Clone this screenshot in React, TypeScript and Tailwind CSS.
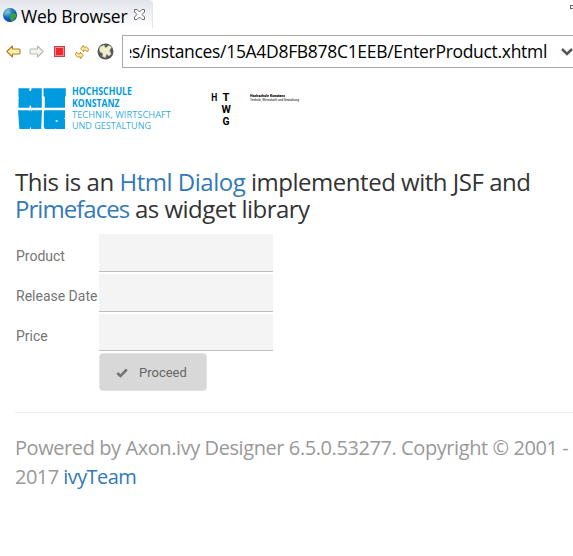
import React from "react";

const Globe = () => (
  <svg width="16" height="16" viewBox="0 0 16 16">
    <defs>
      <radialGradient id="sea" cx="35%" cy="30%" r="75%">
        <stop offset="0" stopColor="#7fc4f5" />
        <stop offset="0.45" stopColor="#1f6fd0" />
        <stop offset="1" stopColor="#0d2f92" />
      </radialGradient>
    </defs>
    <circle cx="8" cy="8" r="7" fill="url(#sea)" />
    <path d="M2 5Q4 1 8 1.2L9 3L7 5L5 6L4 8L2 9Z" fill="#7dc8a0" fillOpacity=".5" />
    <path d="M8 7L11 6L14 7L14 10L11 14L9 14L8 11Z" fill="#35a43a" />
    <path d="M10 2L13 4L12 5Z" fill="#49ad4b" />
  </svg>
);

const CloseIcon = () => (
  <svg width="11" height="11" viewBox="0 0 11 11" fill="#fff" stroke="#6b6b6b" strokeWidth="1">
    <path d="M.5.5H3L5.5 3L8 .5H10.5V3L8 5.5L10.5 8V10.5H8L5.5 8L3 10.5H.5V8L3 5.5L.5 3Z" />
  </svg>
);

const Arrow = ({ flip = false }: { flip?: boolean }) => (
  <svg width="15" height="13" viewBox="0 0 15 13" className={flip ? "-scale-x-100" : ""}>
    <path
      d="M.8 6.5L6.5 1V4H13Q14 4 14 5V8Q14 9 13 9H6.5V12Z"
      fill={flip ? "#f3f3ef" : "#fff2b8"}
      stroke={flip ? "#b9b9b5" : "#b87a14"}
      strokeWidth="1.1"
      strokeLinejoin="round"
    />
  </svg>
);

const Refresh = () => (
  <svg width="16" height="16" viewBox="0 0 16 16" fill="#ffe9a0" stroke="#c48a22" strokeWidth=".9" strokeLinejoin="round">
    <path d="M6.6 4.8L9.4 1.4V3Q13.2 2.2 14.6 5L13.6 8Q12.6 5.6 9.6 6.2V7.8Z" />
    <path d="M9.4 11.2L6.6 14.6V13Q2.8 13.8 1.4 11L2.4 8Q3.4 10.4 6.4 9.8V8.2Z" />
  </svg>
);

const Earth = () => (
  <svg width="17" height="17" viewBox="0 0 17 17">
    <circle cx="8.5" cy="8.5" r="8" fill="#555957" />
    <path
      d="M3 4L7 2L8.5 5L12 2.5L14.5 4L12.5 7.5L14 11L12 13L9.5 11L8.5 14.5L5.5 13.5L6 10.5L3 9L2.5 6.5Z"
      fill="#eeefc9"
      stroke="#c6cbb0"
      strokeWidth=".5"
    />
  </svg>
);

const KonstanzLogo = () => (
  <svg width="160" height="48" viewBox="15 84 160 48" fill="#009ade">
    <path d="M18.5 88.3H29.2L29.6 91H31L31.5 88.3H41.8V107.8H31.3L30.9 105.5H29.8L29.2 107.8H18.5V99L19.1 98L18.5 97Z" />
    <path d="M43.5 88.3H65.8V96L65 97V107.8H44.8V97L43.5 96Z" />
    <path d="M18 110.2H28.8L29.2 111.5L29.8 110.2H31.2L31.7 111.5L32.2 110.2H42L41.2 129H31.2L30.5 126.5L29.7 129H19.4Z" />
    <path d="M44.6 110.2H65V117.8L63.5 118.3L65 119V129H56.2L55.7 128.3L55.2 129H45L43.8 127V112Z" />
    <path d="M55.6 120.2H57.2L58.4 121L57 121.8H55.6Z" fill="#fff" />
    <g fontFamily="'Open Sans', 'Noto Sans', sans-serif">
      <g fontWeight="700" fontSize="9.8">
        <text x="72" y="95.4" textLength="60" lengthAdjust="spacingAndGlyphs">HOCHSCHULE</text>
        <text x="72" y="106.9" textLength="47.5" lengthAdjust="spacingAndGlyphs">KONSTANZ</text>
      </g>
      <text x="72" y="118" fontSize="9.8" fillOpacity=".85" textLength="99" lengthAdjust="spacingAndGlyphs">TECHNIK, WIRTSCHAFT</text>
      <text x="72" y="129" fontSize="9.8" fillOpacity=".85" textLength="79" lengthAdjust="spacingAndGlyphs">UND GESTALTUNG</text>
    </g>
  </svg>
);

const HtwgLogo = () => (
  <svg width="92" height="40" viewBox="209 88 92 40" fill="#000" fontFamily="Roboto, sans-serif">
    <g fontWeight="700" fontSize="11.6">
      <text x="211.3" y="101" textLength="6" lengthAdjust="spacingAndGlyphs">H</text>
      <text x="222.5" y="101" textLength="7" lengthAdjust="spacingAndGlyphs">T</text>
      <text x="221.6" y="113" textLength="9.4" lengthAdjust="spacingAndGlyphs">W</text>
      <text x="222.5" y="125" textLength="7" lengthAdjust="spacingAndGlyphs">G</text>
    </g>
    <text x="250" y="97.2" fontSize="2.8" fontWeight="900" textLength="35" lengthAdjust="spacingAndGlyphs">Hochschule Konstanz</text>
    <text x="250" y="101.4" fontSize="3.4" textLength="49" lengthAdjust="spacingAndGlyphs">Technik, Wirtschaft und Gestaltung</text>
  </svg>
);

const Field = ({ label, last = false }: { label: string; last?: boolean }) => (
  <label className={last ? "flex h-[37px] items-center" : "flex h-[38px] items-center"}>
    <span className={last ? "w-[84px] shrink-0 whitespace-nowrap pl-px pt-2 text-[14px] text-[#757575]" : "w-[84px] shrink-0 whitespace-nowrap pl-px pt-1.5 text-[14px] text-[#757575]"}>{label}</span>
    <input className="h-full w-[174px] border-b border-[#bdbdbd] bg-[#f4f4f4] outline-none" />
  </label>
);

export default function App() {
  return (
    <div className="h-[556px] w-[573px] overflow-hidden bg-white font-['Open_Sans','Noto_Sans',sans-serif]">
      <header className="flex h-7 items-start justify-between">
        <div className="flex h-7 w-[153px] items-center rounded-tr-sm border-r border-[#e3e4ec] bg-linear-to-b from-[#e2e4ec] to-white pl-0.5 pt-0.5">
          <Globe />
          <span className="ml-[3px] w-[113px] whitespace-nowrap pt-0.5 text-[17.5px] leading-7 tracking-[-0.25px] text-black">Web Browser</span>
          <span className="-mt-0.5"><CloseIcon /></span>
        </div>
        <span className="mt-[5px] h-1 w-[3px] border border-r-0 border-[#666]" />
      </header>

      <nav className="flex h-[47px] items-center pl-1.5">
        <div className="flex w-[116px] items-center">
          <Arrow />
          <span className="ml-2 flex"><Arrow flip /></span>
          <span className="ml-2.5 size-[11px] border border-[#c8404c] bg-[#ee2730] shadow-[inset_0_0_0_1px_#f58a8d]" />
          <span className="ml-[9px]"><Refresh /></span>
          <span className="ml-[7px]"><Earth /></span>
        </div>
        <div className="flex h-[33px] flex-1 items-center overflow-hidden border border-r-0 border-[#a8a8a8]">
          <div className="ml-[7px] flex w-[420px] justify-end overflow-hidden">
            <span className="whitespace-nowrap text-[17.5px] tracking-[-0.31px] text-black">es/instances/15A4D8FB878C1EEB/EnterProduct.xhtml</span>
          </div>
          <svg className="ml-[14px] shrink-0" width="12" height="10" viewBox="0 0 12 10" fill="none" stroke="#555" strokeWidth="2.5">
            <path d="M1 2L6 7L11 2" />
          </svg>
        </div>
      </nav>

      <main className="pl-[15px]">
        <div className="flex h-[93px] pt-[9px]">
          <KonstanzLogo />
          <span className="ml-[34px] mt-1"><HtwgLogo /></span>
        </div>
        <h1 className="whitespace-nowrap text-[24px] leading-[27px] text-[#333]">
          <span className="block tracking-[-0.48px]">
            This is an <a className="text-[#337ab7]">Html Dialog</a> implemented with JSF and
          </span>
          <span className="block tracking-[-0.52px]">
            <a className="tracking-[-0.95px] text-[#337ab7]">Primefaces</a> as widget library
          </span>
        </h1>
        <form className="mt-3 flex flex-col gap-0.5 font-['Roboto',sans-serif]">
          <Field label="Product" />
          <Field label="Release Date" />
          <Field label="Price" last />
          <button type="button" className="ml-[84px] flex h-[38px] w-[108px] items-center rounded-sm border border-[#e2e2e2] bg-[#d8d8d8] text-[13px] text-[#666]">
            <svg className="ml-4 mt-0.5" width="12" height="10" viewBox="0 0 12 10" fill="none" stroke="#757575" strokeWidth="2.6">
              <path d="M1.3 5L4.5 8L10.8 1.5" />
            </svg>
            <span className="ml-[11px] pt-0.5">Proceed</span>
          </button>
        </form>
        <footer className="mt-[21px] whitespace-nowrap border-t border-[#eee] pt-5 text-[20px] leading-[29px] text-[#999]">
          <span className="block tracking-[-0.42px]">Powered by Axon.ivy Designer 6.5.0.53277. Copyright © 2001 -</span>
          <span className="block tracking-[-0.55px]">2017 <a className="text-[#337ab7]">ivyTeam</a></span>
        </footer>
      </main>
    </div>
  );
}
